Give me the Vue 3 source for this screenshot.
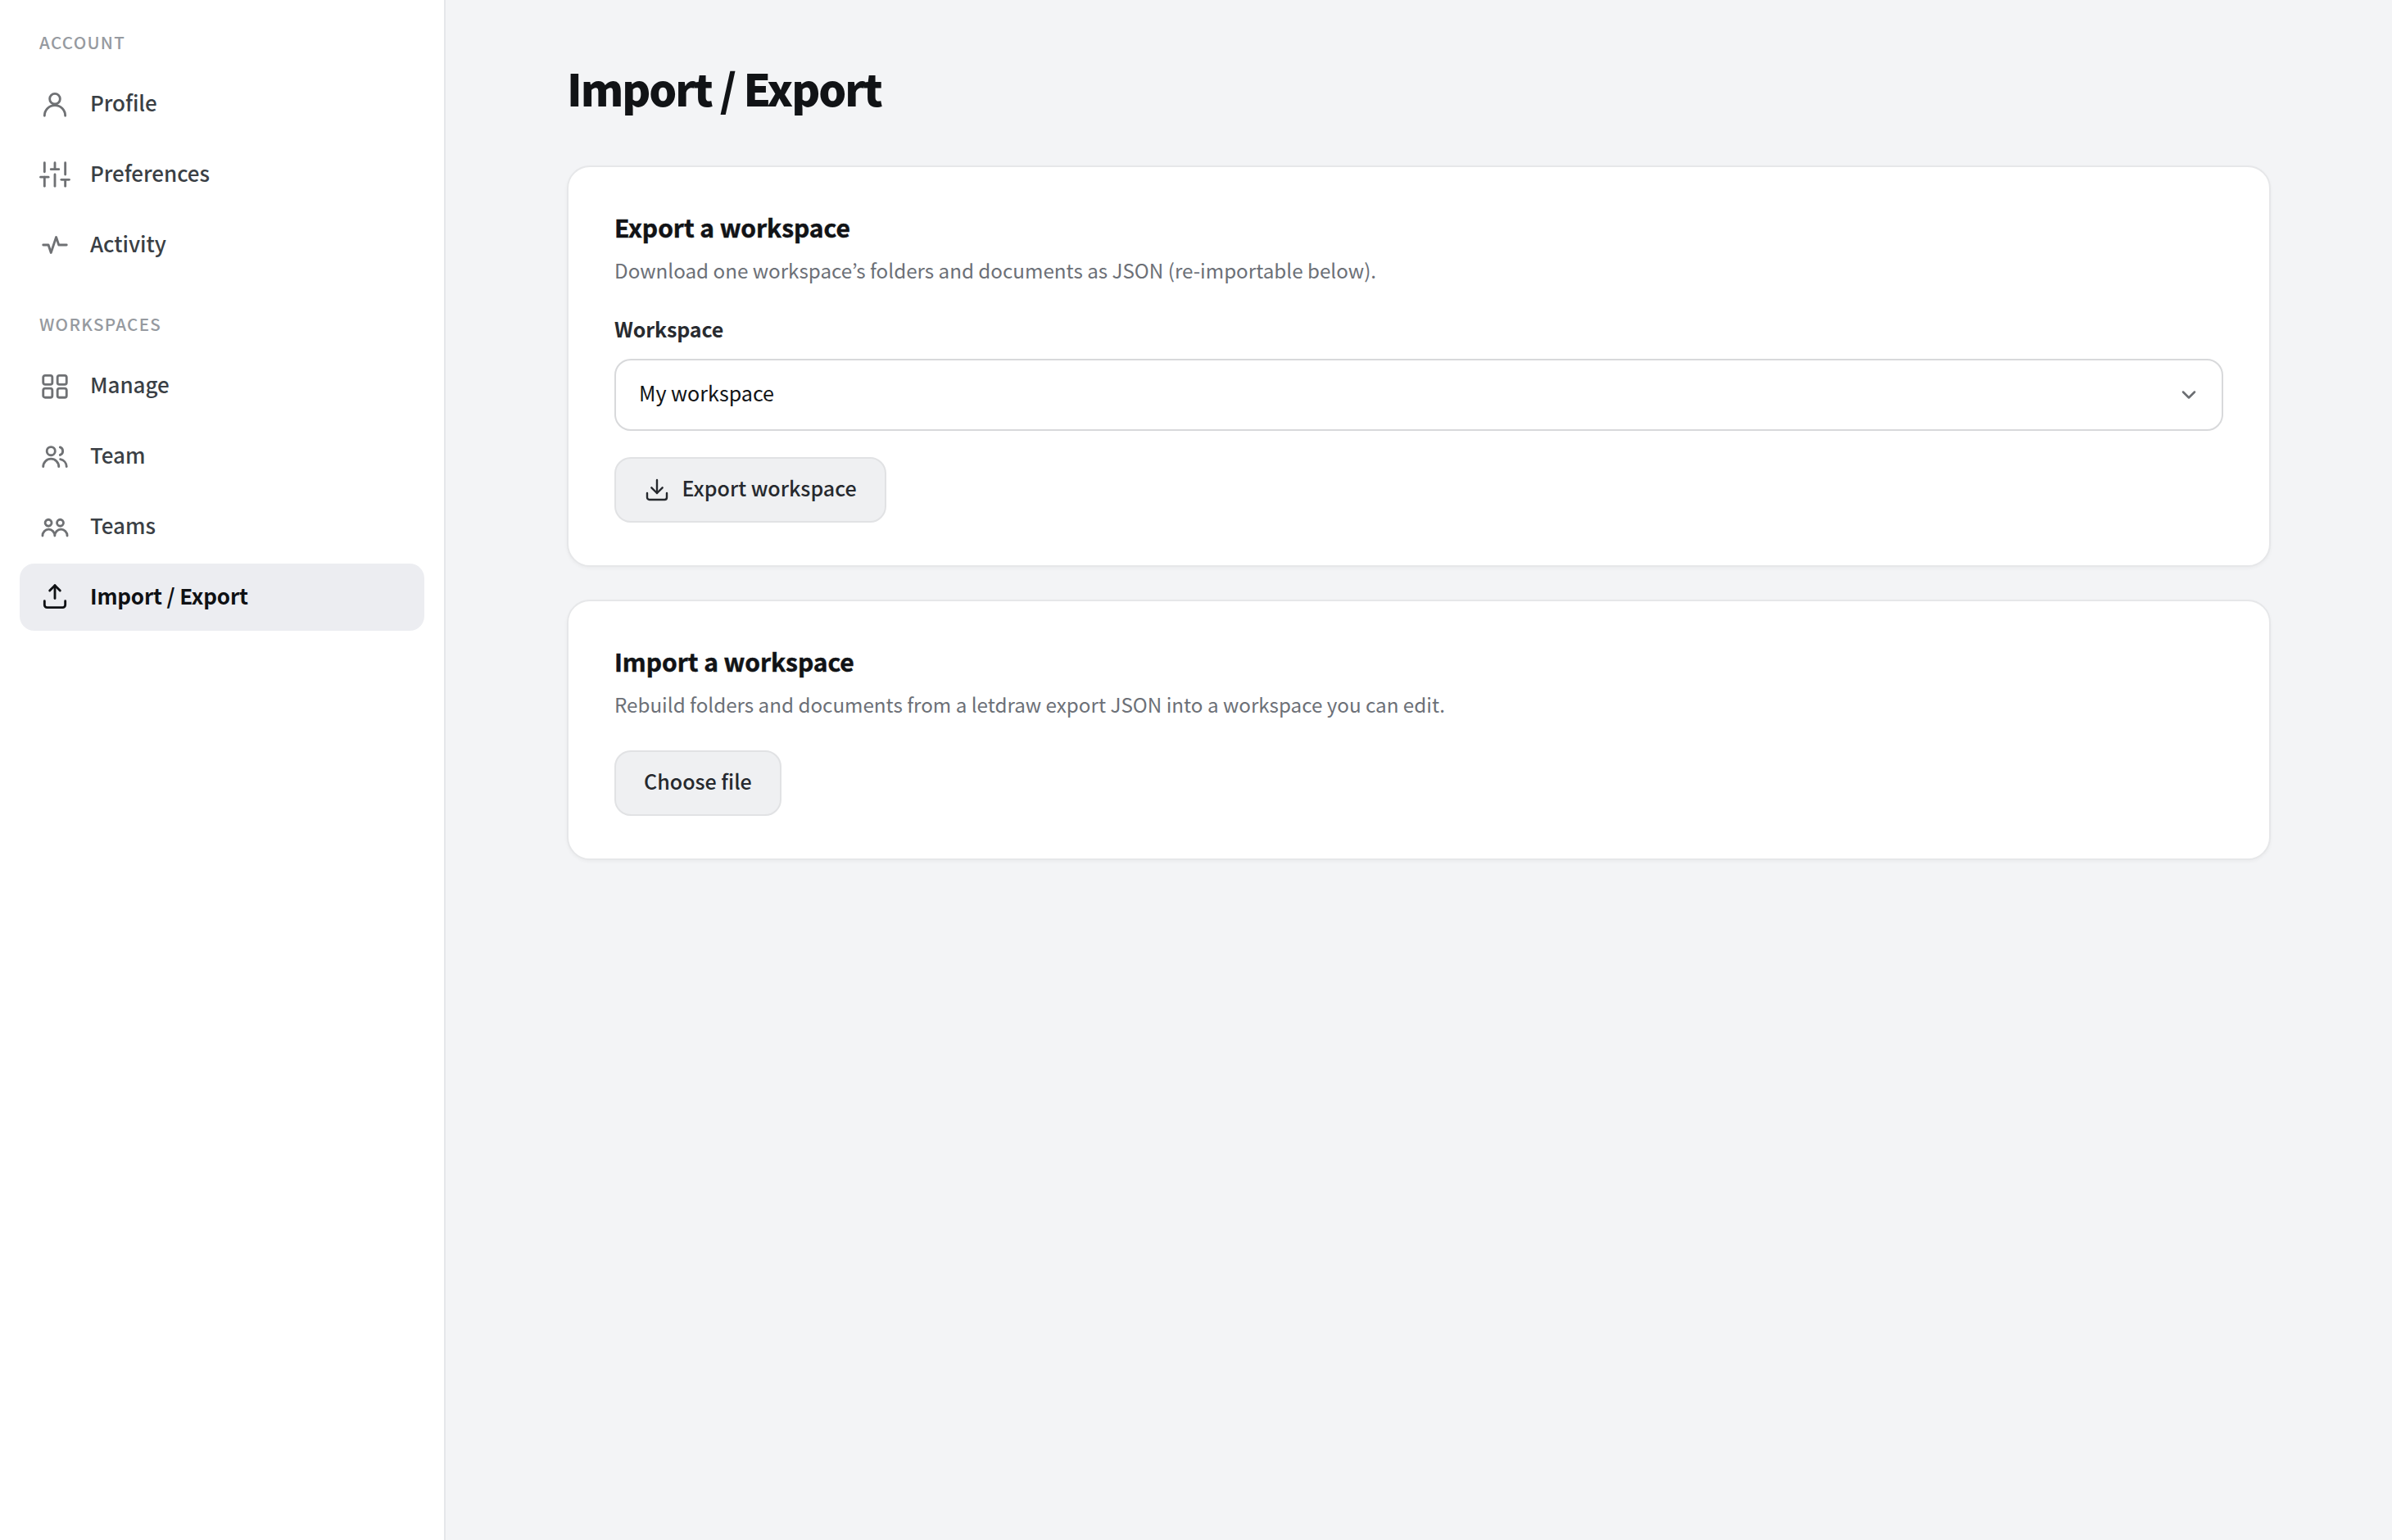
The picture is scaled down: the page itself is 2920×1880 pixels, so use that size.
<template>
  <div class="settings">
    <aside class="sidebar">
      <nav v-for="group in groups" :key="group.title" class="nav-group">
        <h2 class="nav-title">{{ group.title }}</h2>
        <ul class="nav-list">
          <li v-for="item in group.items" :key="item.id">
            <a class="nav-item" :class="{ active: current === item.id }" @click="current = item.id">
              <svg class="nav-icon" viewBox="0 0 24 24">
                <path v-for="d in item.paths" :key="d" :d="d" />
              </svg>
              <span class="nav-label">{{ item.label }}</span>
            </a>
          </li>
        </ul>
      </nav>
    </aside>

    <main class="main">
      <div class="page">
        <h1 class="page-title">Import / Export</h1>

        <section class="card">
          <h3 class="card-title">Export a workspace</h3>
          <p class="card-desc">Download one workspace’s folders and documents as JSON (re-importable below).</p>
          <label class="field-label">Workspace</label>
          <div class="select">
            <span class="select-value">{{ workspace }}</span>
            <svg class="select-chevron" viewBox="0 0 24 24">
              <path d="M6 9l6 6 6-6" />
            </svg>
          </div>
          <button class="btn" type="button">
            <svg class="btn-icon" viewBox="0 0 24 24">
              <path d="M21 15v4a2 2 0 0 1-2 2H5a2 2 0 0 1-2-2v-4" />
              <path d="M7 10l5 5 5-5" />
              <path d="M12 15V3" />
            </svg>
            <span class="btn-label">Export workspace</span>
          </button>
        </section>

        <section class="card">
          <h3 class="card-title">Import a workspace</h3>
          <p class="card-desc">Rebuild folders and documents from a letdraw export JSON into a workspace you can edit.</p>
          <button class="btn btn-file" type="button">
            <span class="btn-label">Choose file</span>
          </button>
        </section>
      </div>
    </main>
  </div>
</template>

<script setup>
import { ref } from 'vue'

const current = ref('import-export')
const workspace = ref('My workspace')

const groups = [
  {
    title: 'Account',
    items: [
      {
        id: 'profile',
        label: 'Profile',
        paths: ['M8 8a4 4 0 1 0 8 0a4 4 0 1 0-8 0', 'M4 21a8 8 0 0 1 16 0']
      },
      {
        id: 'preferences',
        label: 'Preferences',
        paths: [
          'M4 21v-7', 'M4 10V3', 'M12 21v-9', 'M12 8V3', 'M20 21v-5', 'M20 12V3',
          'M1 14h6', 'M9 8h6', 'M17 16h6'
        ]
      },
      {
        id: 'activity',
        label: 'Activity',
        paths: ['M3 12h4l2 6 4-12 2 6h6']
      }
    ]
  },
  {
    title: 'Workspaces',
    items: [
      {
        id: 'manage',
        label: 'Manage',
        paths: [
          'M4.5 4h4a1.5 1.5 0 0 1 1.5 1.5v4a1.5 1.5 0 0 1-1.5 1.5h-4a1.5 1.5 0 0 1-1.5-1.5v-4a1.5 1.5 0 0 1 1.5-1.5z',
          'M15.5 4h4a1.5 1.5 0 0 1 1.5 1.5v4a1.5 1.5 0 0 1-1.5 1.5h-4a1.5 1.5 0 0 1-1.5-1.5v-4a1.5 1.5 0 0 1 1.5-1.5z',
          'M4.5 14h4a1.5 1.5 0 0 1 1.5 1.5v4a1.5 1.5 0 0 1-1.5 1.5h-4a1.5 1.5 0 0 1-1.5-1.5v-4a1.5 1.5 0 0 1 1.5-1.5z',
          'M15.5 14h4a1.5 1.5 0 0 1 1.5 1.5v4a1.5 1.5 0 0 1-1.5 1.5h-4a1.5 1.5 0 0 1-1.5-1.5v-4a1.5 1.5 0 0 1 1.5-1.5z'
        ]
      },
      {
        id: 'team',
        label: 'Team',
        paths: [
          'M5.8 8a3.2 3.2 0 1 0 6.4 0a3.2 3.2 0 1 0-6.4 0',
          'M3 20a6 6 0 0 1 12 0',
          'M16 5a3.2 3.2 0 0 1 0 6',
          'M16.2 14.3A6 6 0 0 1 21 20'
        ]
      },
      {
        id: 'teams',
        label: 'Teams',
        paths: [
          'M4.5 9a2.5 2.5 0 1 0 5 0a2.5 2.5 0 1 0-5 0',
          'M13.6 9a2.5 2.5 0 1 0 5 0a2.5 2.5 0 1 0-5 0',
          'M2.5 19a4.7 5 0 0 1 9.4 0a4.8 5 0 0 1 9.6 0'
        ]
      },
      {
        id: 'import-export',
        label: 'Import / Export',
        paths: ['M12 13V3', 'M8 7l4-4 4 4', 'M4 15v3a2 2 0 0 0 2 2h12a2 2 0 0 0 2-2v-3']
      }
    ]
  }
]
</script>

<style>
body {
  margin: 0;
  background: #f3f4f6;
}
</style>

<style scoped>
.settings {
  display: flex;
  min-height: 100vh;
  background: #f3f4f6;
  color: #111316;
  font-family: 'Noto Sans CJK KR', 'Noto Sans', sans-serif;
}

h1,
h2,
h3,
p,
ul {
  margin: 0;
  padding: 0;
}

svg {
  display: block;
  flex: none;
  fill: none;
  stroke: currentColor;
  stroke-linecap: round;
  stroke-linejoin: round;
  stroke-width: 1.8;
}

/* Sidebar */
.sidebar {
  box-sizing: border-box;
  flex: none;
  width: 544px;
  padding: 36px 24px;
  background: #fff;
  border-right: 2px solid #e5e7ea;
}

.nav-group + .nav-group {
  margin-top: 40px;
}

.nav-title {
  padding: 0 24px;
  margin-bottom: 20px;
  font-size: 20.6px;
  font-weight: 500;
  line-height: 30px;
  letter-spacing: 1.3px;
  text-transform: uppercase;
  color: #969aa0;
}

.nav-list {
  display: flex;
  flex-direction: column;
  gap: 4px;
  list-style: none;
}

.nav-item {
  box-sizing: border-box;
  display: flex;
  align-items: center;
  gap: 24px;
  height: 82px;
  padding: 0 24px;
  border-radius: 18px;
  color: #3a3f45;
  cursor: pointer;
}

.nav-icon {
  width: 38px;
  height: 38px;
  color: #6f7174;
}

.nav-label {
  padding-bottom: 4px;
  font-size: 26px;
  font-weight: 500;
  line-height: 40px;
  letter-spacing: -0.05px;
}

.nav-item.active {
  background: #ecedf1;
  color: #0f1114;
}

.nav-item.active .nav-icon {
  color: #0f1114;
}

.nav-item.active .nav-label {
  font-weight: 700;
  letter-spacing: -0.18px;
}

/* Page */
.main {
  flex: 1;
  padding: 76px 80px;
}

.page {
  max-width: 2080px;
  margin: 0 auto;
}

.page-title {
  margin-bottom: 65px;
  font-size: 53.4px;
  font-weight: 900;
  line-height: 61px;
  letter-spacing: -2.05px;
}

.card {
  padding: 52px 56px;
  background: #fff;
  border: 2px solid #e6e7e9;
  border-radius: 28px;
  box-shadow: 0 2px 4px rgba(16, 20, 28, 0.04);
}

.card + .card {
  margin-top: 40px;
}

.card-title {
  font-size: 30px;
  font-weight: 700;
  line-height: 42px;
  letter-spacing: -0.04px;
  -webkit-text-stroke: 0.5px currentColor;
}

.card-desc {
  margin-top: 12px;
  font-size: 24.2px;
  line-height: 40px;
  color: #6c7077;
}

.field-label {
  display: block;
  margin: 33px 0 19px;
  font-size: 25px;
  font-weight: 700;
  line-height: 36px;
  letter-spacing: -0.13px;
  color: #282b30;
}

.select {
  box-sizing: border-box;
  display: flex;
  align-items: center;
  justify-content: space-between;
  height: 88px;
  padding: 0 26px 0 28px;
  border: 2px solid #d8d9db;
  border-radius: 20px;
  background: #fff;
}

.select-value {
  padding-bottom: 6px;
  font-size: 25.1px;
  line-height: 36px;
}

.select-chevron {
  width: 28px;
  height: 28px;
  color: #6b6e72;
  stroke-width: 2.2;
}

.btn {
  box-sizing: border-box;
  display: flex;
  align-items: center;
  gap: 14.5px;
  height: 80px;
  margin-top: 32px;
  padding: 0 34px;
  border: 2px solid #e1e2e4;
  border-radius: 20px;
  background: #eff0f2;
  color: #26292e;
  font-family: inherit;
  font-size: 25.05px;
  font-weight: 500;
  cursor: pointer;
}

.btn-file {
  margin-top: 36px;
}

.btn-icon {
  width: 32px;
  height: 32px;
}

.btn-label {
  padding-bottom: 6px;
  line-height: 36px;
}
</style>
